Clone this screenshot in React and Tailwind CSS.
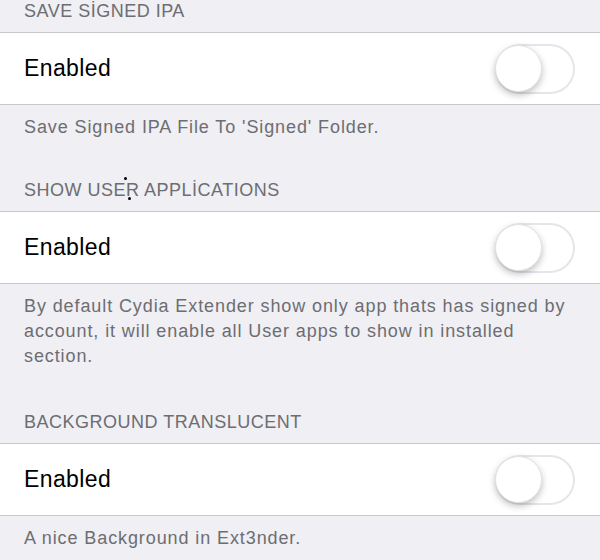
import React from 'react';

function Toggle() {
    return (
        <div className="relative w-[80px] h-[50px] rounded-full border-2 border-[#e6e6ea] bg-white">
            <div className="absolute left-[-2px] top-[-1px] w-[47px] h-[47px] rounded-full bg-white border border-[#e2e2e2] shadow-[0_3px_7px_rgba(0,0,0,0.25)]" />
        </div>
    );
}

function Row() {
    return (
        <div className="h-[73px] bg-white border-y border-[#c8c7cc] flex items-center justify-between pl-6 pr-[25px]">
            <span className="text-[23px] tracking-[0.4px] text-black">Enabled</span>
            <Toggle />
        </div>
    );
}

function Section({ title, note, top, children }) {
    return (
        <div>
            <div className={`relative px-6 pb-[10px] text-[18px] leading-[22px] tracking-[0.5px] text-[#6d6d72] ${top}`}>
                {title}
                {children}
            </div>
            <Row />
            <div className="px-6 pt-[10px] text-[18px] leading-[25px] tracking-[0.9px] text-[#6d6d72]">{note}</div>
        </div>
    );
}

export default function App() {
    return (
        <div className="w-[600px] h-[560px] overflow-hidden bg-[#efeff4]" style={{ fontFamily: '"Liberation Sans", Arial, sans-serif' }}>
            <Section title="SAVE SİGNED IPA" note="Save Signed IPA File To 'Signed' Folder." top="pt-0" />
            <Section
                title="SHOW USER APPLİCATIONS"
                note="By default Cydia Extender show only app thats has signed by account, it will enable all User apps to show in installed section."
                top="pt-[39px]"
            >
                <span className="absolute left-[124px] top-[37px] w-[3px] h-[3px] rounded-full bg-black" />
                <span className="absolute left-[128px] top-[57px] w-[3px] h-[3px] rounded-full bg-black" />
            </Section>
            <Section title="BACKGROUND TRANSLUCENT" note="A nice Background in Ext3nder." top="pt-[42px]" />
        </div>
    );
}
